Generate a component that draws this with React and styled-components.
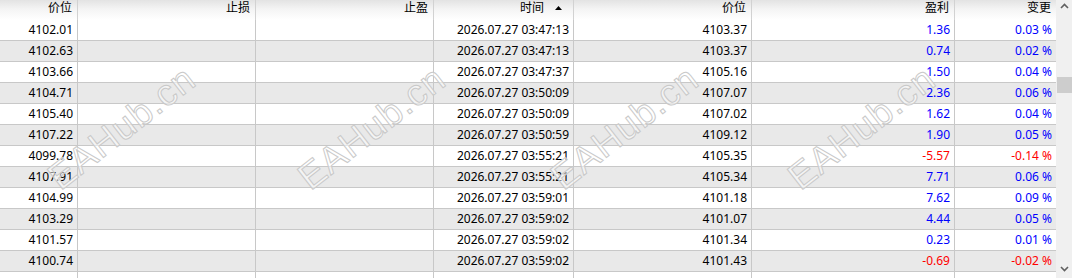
import React from 'react';
import styled, { createGlobalStyle } from 'styled-components';

const GlobalStyle = createGlobalStyle`
  html, body {
    margin: 0;
    padding: 0;
    background: #ffffff;
    overflow: hidden;
  }
`;

const COLS = '78px 178px 178px 140px 178px 203px 101px';

const columns = ['价位', '止损', '止盈', '时间', '价位', '盈利', '变更'];

const rows = [
  ['4102.01', '03:47:13', '4103.37', '1.36', '0.03'],
  ['4102.63', '03:47:13', '4103.37', '0.74', '0.02'],
  ['4103.66', '03:47:37', '4105.16', '1.50', '0.04'],
  ['4104.71', '03:50:09', '4107.07', '2.36', '0.06'],
  ['4105.40', '03:50:09', '4107.02', '1.62', '0.04'],
  ['4107.22', '03:50:59', '4109.12', '1.90', '0.05'],
  ['4099.78', '03:55:21', '4105.35', '-5.57', '-0.14'],
  ['4107.91', '03:55:21', '4105.34', '7.71', '0.06'],
  ['4104.99', '03:59:01', '4101.18', '7.62', '0.09'],
  ['4103.29', '03:59:02', '4101.07', '4.44', '0.05'],
  ['4101.57', '03:59:02', '4101.34', '0.23', '0.01'],
  ['4100.74', '03:59:02', '4101.43', '-0.69', '-0.02'],
];

const marks = [122, 372, 625, 862];

const Frame = styled.div`
  display: flex;
  width: 1072px;
  height: 278px;
  overflow: hidden;
  font-family: 'Noto Sans', 'Noto Sans CJK SC', sans-serif;
`;

const TableArea = styled.div`
  position: relative;
  width: 1056px;
  height: 278px;
  overflow: hidden;
`;

const HeaderRow = styled.div`
  display: grid;
  grid-template-columns: ${COLS};
  height: 20px;
  background: linear-gradient(to bottom, #e3e3e3 0%, #f4f4f4 45%, #ffffff 100%);
`;

const HeaderCell = styled.div`
  display: flex;
  justify-content: flex-end;
  align-items: flex-start;
  gap: 11px;
  box-sizing: border-box;
  padding: 0 5px 0 0;
  font-size: 12px;
  line-height: 15px;
  color: #000;
  border-right: ${(p) => (p.$last ? 'none' : '1px solid #d2d2d2')};
`;

const SortArrow = styled.svg`
  width: 7px;
  height: 4px;
  margin-top: 6px;
  margin-right: 6px;
`;

const Row = styled.div`
  display: grid;
  grid-template-columns: ${COLS};
  height: 21px;
  box-sizing: border-box;
  border-bottom: 1px solid #c8c8c8;
  background: ${(p) => (p.$odd ? '#e9e9e9' : '#ffffff')};
`;

const Cell = styled.div`
  box-sizing: border-box;
  padding-right: 4px;
  text-align: right;
  font-size: 12px;
  line-height: 20px;
  white-space: nowrap;
  color: ${(p) => (p.$tone === 'up' ? '#0000ff' : p.$tone === 'down' ? '#ff0000' : '#000000')};
  border-right: ${(p) => (p.$last ? 'none' : '1px solid #c8c8c8')};
`;

const Watermark = styled.div`
  position: absolute;
  top: 128px;
  font-family: 'Liberation Sans', sans-serif;
  font-size: 37px;
  letter-spacing: 1px;
  color: rgba(255, 255, 255, 0.55);
  -webkit-text-stroke: 1px #c9c9c9;
  transform: translate(-50%, -50%) rotate(-38deg);
  pointer-events: none;
  white-space: nowrap;
`;

const ScrollBar = styled.div`
  display: flex;
  flex-direction: column;
  width: 16px;
  height: 278px;
  background: #f0f0f0;
`;

const ScrollButton = styled.div`
  display: flex;
  justify-content: center;
  align-items: ${(p) => (p.$down ? 'flex-end' : 'flex-start')};
  height: 17px;
  padding: ${(p) => (p.$down ? '0 0 6px' : '3px 0 0')};
  box-sizing: border-box;
`;

const Track = styled.div`
  flex: 1;
`;

const Thumb = styled.div`
  width: 15px;
  height: 16px;
  margin: 60px 0 0 1px;
  background: #cdcdcd;
`;

const Chevron = ({ down }) => (
  <svg width="9" height="6" viewBox="0 0 9 6">
    <path
      d={down ? 'M1 1 L4.5 4.5 L8 1' : 'M1 5 L4.5 1.5 L8 5'}
      fill="none"
      stroke="#606060"
      strokeWidth="1.6"
    />
  </svg>
);

const tone = (v) => (v.startsWith('-') ? 'down' : 'up');

export default function App() {
  return (
    <>
      <GlobalStyle />
      <Frame>
        <TableArea>
          <HeaderRow>
            {columns.map((c, i) => (
              <HeaderCell key={i} $last={i === columns.length - 1}>
                <span>{c}</span>
                {i === 3 && (
                  <SortArrow viewBox="0 0 7 4">
                    <path d="M0 4 L3.5 0 L7 4 Z" fill="#000" />
                  </SortArrow>
                )}
              </HeaderCell>
            ))}
          </HeaderRow>
          {rows.map((r, i) => (
            <Row key={i} $odd={i % 2 === 1}>
              <Cell>{r[0]}</Cell>
              <Cell />
              <Cell />
              <Cell>2026.07.27 {r[1]}</Cell>
              <Cell>{r[2]}</Cell>
              <Cell $tone={tone(r[3])}>{r[3]}</Cell>
              <Cell $tone={tone(r[4])} $last>{r[4]} %</Cell>
            </Row>
          ))}
          <Row>
            {columns.map((c, i) => (
              <Cell key={i} $last={i === columns.length - 1} />
            ))}
          </Row>
          {marks.map((x) => (
            <Watermark key={x} style={{ left: x }}>EAHub.cn</Watermark>
          ))}
        </TableArea>
        <ScrollBar>
          <ScrollButton>
            <Chevron />
          </ScrollButton>
          <Track>
            <Thumb />
          </Track>
          <ScrollButton $down>
            <Chevron down />
          </ScrollButton>
        </ScrollBar>
      </Frame>
    </>
  );
}
